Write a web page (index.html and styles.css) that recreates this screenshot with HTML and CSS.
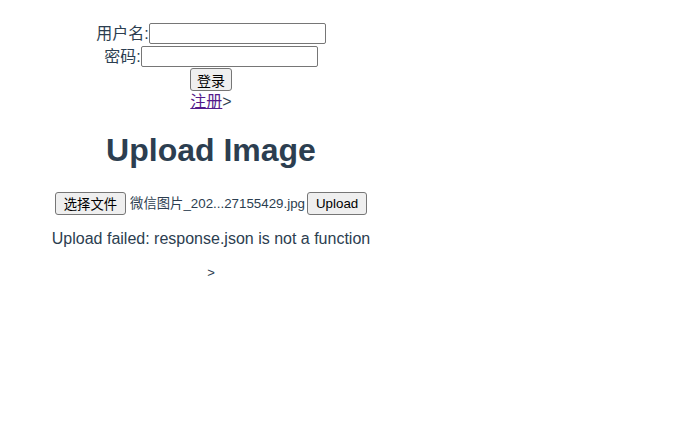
FILE: index.html
```html
<!DOCTYPE html>
<html lang="zh">
<head>
<meta charset="utf-8">
<title>Upload Image</title>
<link rel="stylesheet" href="styles.css">
</head>
<body>
<div class="app">
  <form class="login">
    <div class="row"><label>用户名:</label><input class="field" type="text"></div>
    <div class="row"><label>密码:</label><input class="field" type="password"></div>
    <div class="row"><button class="btn" type="button">登录</button></div>
    <div class="row"><a class="reg" href="#">注册</a>&gt;</div>
  </form>
  <h1 class="title">Upload Image</h1>
  <div class="filerow">
    <button class="btn wide" type="button">选择文件</button><span class="fname">微信图片_202...27155429.jpg</span><button class="btn wide" type="button">Upload</button>
  </div>
  <p class="msg">Upload failed: response.json is not a function</p>
  <div class="arrow">&gt;</div>
</div>
</body>
</html>
```
FILE: styles.css
```css
html, body { margin: 0; padding: 0; background: #fff; }
body { padding: 8px; }
.app {
  width: 406px;
  text-align: center;
  color: #2c3e50;
  font-family: "Liberation Sans", Arial, "Noto Sans CJK SC", sans-serif;
  font-size: 16px;
}
.login { margin: 13px 0 0; }
.row { height: 23px; line-height: 23px; }
.row label { vertical-align: middle; }
.field {
  box-sizing: border-box;
  width: 177px;
  height: 21px;
  margin: 0;
  padding: 1px 2px;
  border: 1px solid #767676;
  border-radius: 2px;
  vertical-align: middle;
  font: 13px "Liberation Sans", Arial, sans-serif;
}
.btn {
  box-sizing: border-box;
  height: 23px;
  margin: 0;
  padding: 1px 6px;
  border: 1px solid #767676;
  border-radius: 3px;
  background: #efefef;
  color: #000;
  font: 13px "Liberation Sans", Arial, "Noto Sans CJK SC", sans-serif;
  vertical-align: middle;
}
.login .btn { font-size: 14px; }
.btn.wide { font-size: 13.33px; padding: 1px 8px; }
.reg { color: #551a8b; text-decoration: underline; }
.title { font-size: 32px; font-weight: bold; margin: 19px 0 0; line-height: 37px; }
.filerow { margin-top: 22px; height: 23px; line-height: 23px; font-size: 13.33px; }
.fname { margin: 0 2px 0 4px; vertical-align: middle; }
.msg { margin: 16px 0 0; line-height: 18px; }
.arrow { margin-top: 17px; font-size: 13px; }
```
